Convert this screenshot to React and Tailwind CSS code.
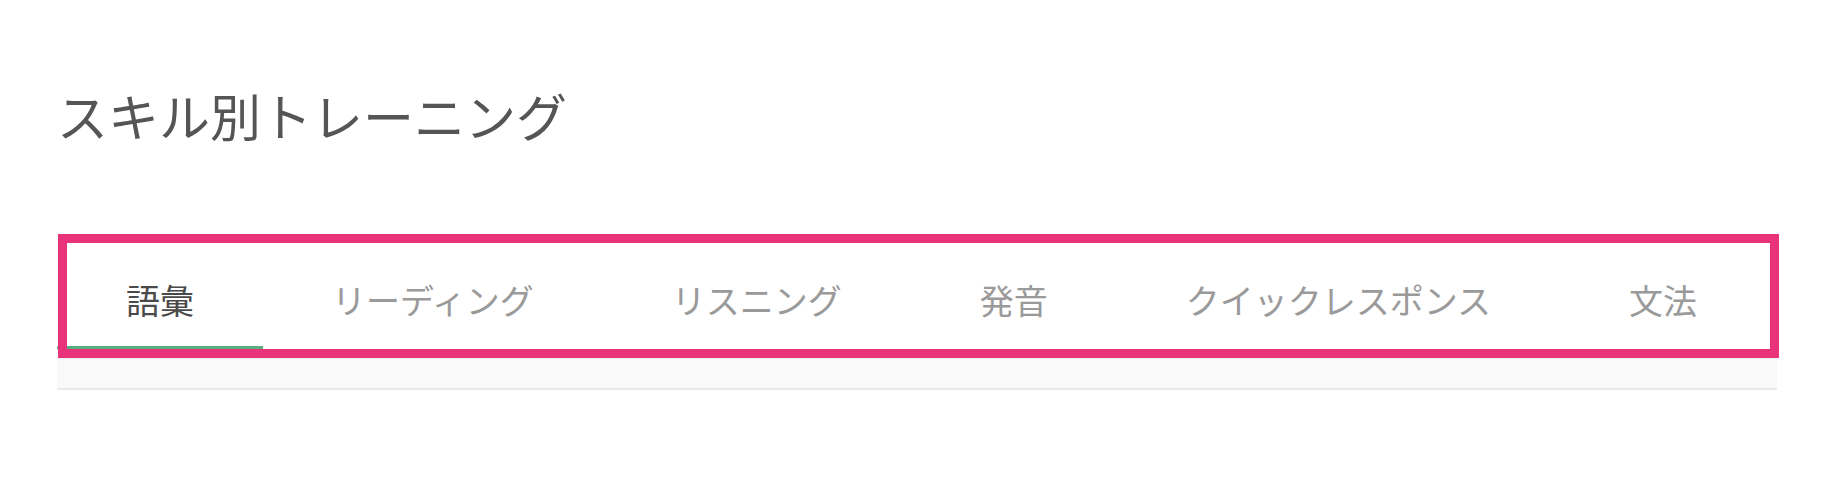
import React, { useState } from 'react';

const TABS = ['語彙', 'リーディング', 'リスニング', '発音', 'クイックレスポンス', '文法'];

const App = () => {
    const [active, setActive] = useState(0);

    return (
        <div
            className="min-h-[482px] w-full bg-white px-[57px]"
            style={{ fontFamily: '"Noto Sans CJK JP", "Noto Sans", sans-serif' }}
        >
            {/* Page title */}
            <h1 className="pt-[90px] text-[51px] font-normal leading-[51px] text-[#555555]">
                スキル別トレーニング
            </h1>

            {/* Skill tabs */}
            <div className="relative mt-[102px]">
                <div className="flex border-b border-[#e6e6e6] pr-[11px]">
                    {TABS.map((tab, index) => (
                        <button
                            key={tab}
                            type="button"
                            onClick={() => setActive(index)}
                            className={
                                index === active
                                    ? 'relative flex-auto whitespace-nowrap pt-[40px] pb-[32px] text-center text-[34px] leading-[34px] text-[#4a4a4a]'
                                    : 'relative flex-auto whitespace-nowrap pt-[40px] pb-[32px] text-center text-[34px] leading-[34px] text-[#9a9a9a]'
                            }
                        >
                            {tab}
                            {index === active && (
                                <span className="absolute bottom-0 left-0 right-0 h-[3px] bg-[#5aad7f]" />
                            )}
                        </button>
                    ))}
                </div>

                {/* Highlight frame */}
                <div className="pointer-events-none absolute -top-[9px] -bottom-[8px] left-[1px] -right-[2px] border-[9px] border-[#e8337a]" />
            </div>

            {/* Tab content strip */}
            <div className="mt-[8px] h-[32px] border-t border-b-2 border-t-[#eeeeee] border-b-[#e9e9e9] bg-[#f9f9f9]" />
        </div>
    );
};

export default App;
